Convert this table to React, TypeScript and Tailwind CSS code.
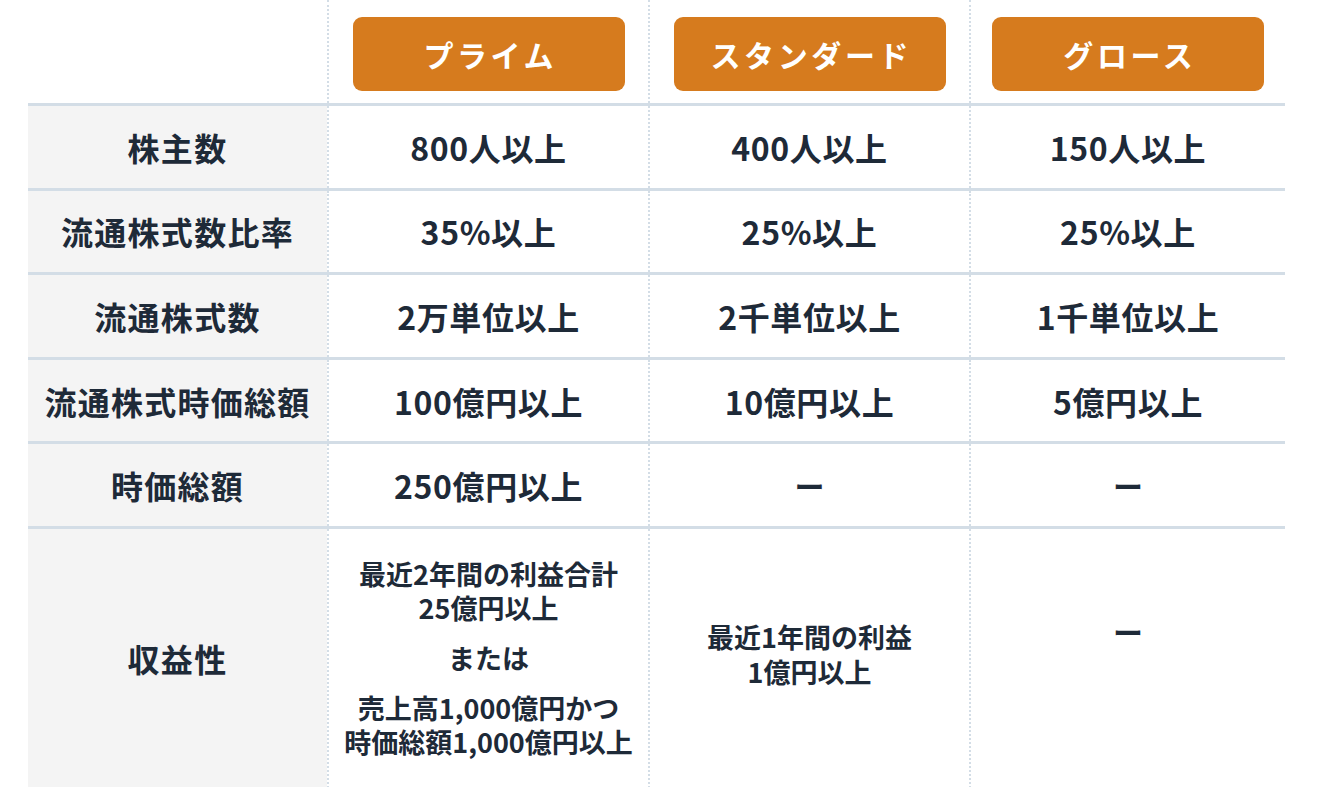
import React from "react"

const font = "font-['Noto_Sans_CJK_JP','Noto_Sans',sans-serif]"

const markets = ["プライム", "スタンダード", "グロース"]

const rows = [
  { label: "株主数", values: ["800人以上", "400人以上", "150人以上"] },
  { label: "流通株式数比率", values: ["35%以上", "25%以上", "25%以上"] },
  { label: "流通株式数", values: ["2万単位以上", "2千単位以上", "1千単位以上"] },
  { label: "流通株式時価総額", values: ["100億円以上", "10億円以上", "5億円以上"] },
  { label: "時価総額", values: ["250億円以上", "ー", "ー"] },
]

const cols = "grid grid-cols-[299px_321px_321px_316px]"
const cellLine = "border-l-2 border-dotted border-[#d3dde6]"

// one line of the small text in the 収益性 row
function Line({ children }: { children: React.ReactNode }) {
  return <span className="block h-[34px] leading-[34px]">{children}</span>
}

export default function App() {
  return (
    <div className={`min-h-[787px] w-full overflow-hidden bg-white text-[#1e2a38] ${font}`}>
      <div className="ml-[28px] w-[1257px]">
        {/* header */}
        <div className={cols}>
          <div />
          {markets.map((m) => (
            <div key={m} className={`${cellLine} flex justify-center pt-[17px] pb-[12px]`}>
              <div className="flex h-[74px] w-[272px] items-center justify-center rounded-[9px] bg-[#d67b1e] pl-[0.12em] text-[30px] font-bold tracking-[0.12em] text-white">
                {m}
              </div>
            </div>
          ))}
        </div>

        {/* simple rows */}
        {rows.map((r) => (
          <div key={r.label} className={`${cols} h-[84.6px] border-t-[3px] border-[#d3dde6]`}>
            <div className="flex items-center justify-center bg-[#f4f4f4] text-[32px] font-bold tracking-[0.04em]">{r.label}</div>
            {r.values.map((v, i) => (
              <div
                key={i}
                className={`${cellLine} flex items-center justify-center font-bold ${v === "ー" ? "text-[30px]" : "text-[32px] tracking-[0.02em]"}`}
              >
                {v}
              </div>
            ))}
          </div>
        ))}

        {/* 収益性 */}
        <div className={`${cols} h-[262px] border-t-[3px] border-[#d3dde6]`}>
          <div className="flex items-center justify-center bg-[#f4f4f4] text-[32px] font-bold tracking-[0.04em]">収益性</div>
          <div className={`${cellLine} flex flex-col items-center justify-center gap-[16px] text-center text-[27px] font-bold`}>
            <div>
              <Line>最近2年間の利益合計</Line>
              <Line>25億円以上</Line>
            </div>
            <Line>または</Line>
            <div>
              <Line>売上高1,000億円かつ</Line>
              <Line>時価総額1,000億円以上</Line>
            </div>
          </div>
          <div className={`${cellLine} flex flex-col items-center justify-center pb-[8px] text-center text-[27px] font-bold`}>
            <span className="block h-[35px] leading-[35px]">最近1年間の利益</span>
            <span className="block h-[35px] leading-[35px]">1億円以上</span>
          </div>
          <div className={`${cellLine} flex items-center justify-center pb-[54px] text-[30px] font-bold`}>ー</div>
        </div>
      </div>
    </div>
  )
}
